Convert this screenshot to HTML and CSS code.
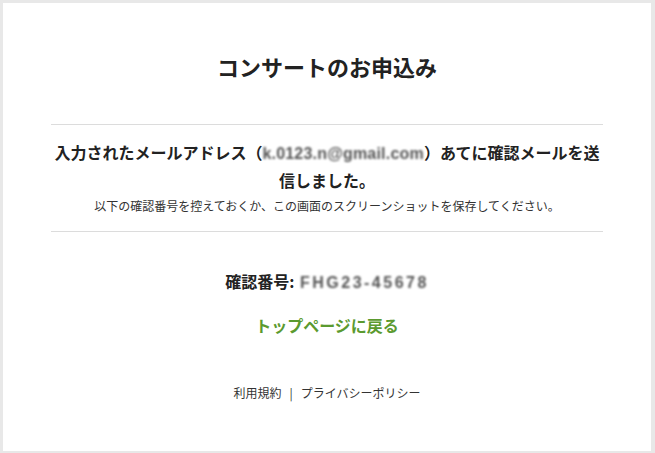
FILE: index.html
```html
<!DOCTYPE html>
<html lang="ja">
<head>
<meta charset="utf-8">
<title>コンサートのお申込み</title>
<link rel="stylesheet" href="styles.css">
</head>
<body>
<main class="card">
  <h1 class="title">コンサートのお申込み</h1>
  <hr class="rule">
  <p class="lead"><span class="nowrap">入力されたメールアドレス（<span class="masked mail">k.0123.n@gmail.com</span>）あてに確認メールを送</span><br>信しました。</p>
  <p class="note">以下の確認番号を控えておくか、この画面のスクリーンショットを保存してください。</p>
  <hr class="rule rule-second">
  <p class="code">確認番号: <span class="masked num">FHG23-45678</span></p>
  <a class="back" href="#">トップページに戻る</a>
  <nav class="footer">
    <a href="#">利用規約</a><span class="sep">|</span><a href="#">プライバシーポリシー</a>
  </nav>
</main>
</body>
</html>
```

FILE: styles.css
```css
html, body {
  margin: 0;
  height: 100%;
}
body {
  background: #e8e8e8;
  padding: 3px 4px 2px 3px;
  box-sizing: border-box;
  font-family: "Noto Sans CJK JP", "Noto Sans", sans-serif;
  color: #222;
}
.card {
  background: #fff;
  height: 100%;
  box-sizing: border-box;
  padding: 0 48px;
  display: flex;
  flex-direction: column;
  align-items: stretch;
  text-align: center;
}
.title {
  margin: 48px 0 0;
  font-size: 22px;
  line-height: 30px;
  font-weight: 700;
  color: #222;
}
.rule {
  border: 0;
  border-top: 1px solid #dcdcdc;
  margin: 43px 0 0;
  height: 0;
}
.lead {
  margin: 14px -4px 0;
  font-size: 16px;
  line-height: 26px;
  font-weight: 700;
  color: #222;
}
.nowrap {
  white-space: nowrap;
}
.masked {
  color: #555;
  filter: blur(0.9px);
  font-family: "Liberation Sans", sans-serif;
}
.mail {
  letter-spacing: 0.2px;
}
.note {
  margin: 4px 0 0;
  font-size: 12px;
  line-height: 18px;
  color: #333;
}
.rule-second {
  margin-top: 16px;
}
.code {
  margin: 37px 0 0;
  font-size: 16px;
  line-height: 24px;
  font-weight: 700;
  color: #222;
}
.num {
  letter-spacing: 2.5px;
  margin-left: 2px;
}
.back {
  margin: 18px auto 0;
  font-size: 16px;
  line-height: 24px;
  font-weight: 700;
  color: #5b9a2f;
  text-decoration: none;
}
.footer {
  margin-top: 47px;
  font-size: 12px;
  line-height: 18px;
  color: #333;
}
.footer a {
  color: #333;
  text-decoration: none;
}
.sep {
  margin: 0 8px;
}
```
